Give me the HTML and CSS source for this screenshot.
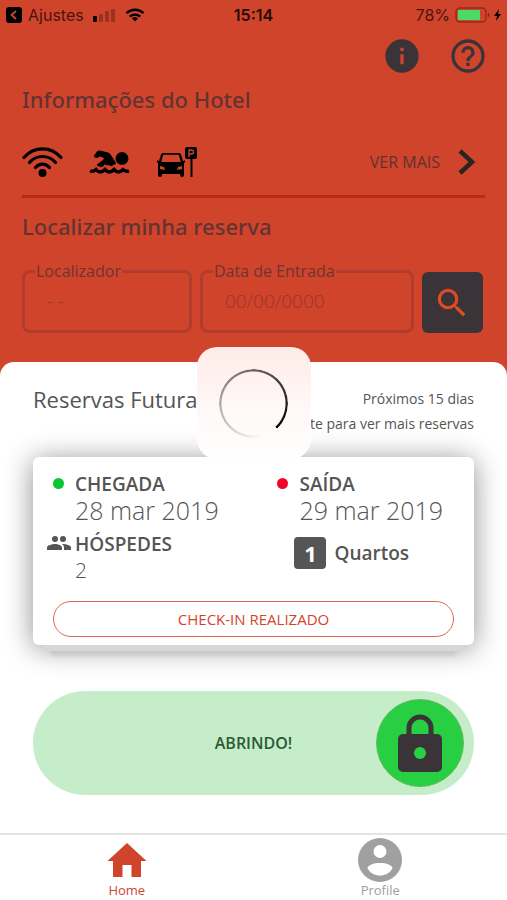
FILE: index.html
```html
<!DOCTYPE html>
<html lang="pt">
<head>
<meta charset="utf-8">
<meta name="viewport" content="width=device-width, initial-scale=1">
<title>Reservas</title>
<link rel="stylesheet" href="styles.css">
</head>
<body>
<header class="hero">
  <div class="status">
    <div class="status-left">
      <svg width="16" height="16" viewBox="0 0 16 16"><rect width="16" height="16" rx="3"/><path d="M10 4 5.500 8l4.500 4" fill="none" stroke="#d0442c" stroke-width="1.800"/></svg>
      <span class="carrier">Ajustes</span>
      <svg class="signal" width="23" height="14" viewBox="0 0 23 14"><rect x="0" y="8" width="4" height="6" rx="1"/><g opacity=".25"><rect x="6" y="6" width="4" height="8" rx="1"/><rect x="12" y="3" width="4" height="11" rx="1"/><rect x="18" y="1" width="4" height="13" rx="1"/></g></svg>
      <svg width="20" height="14" viewBox="0 0 20 14"><g fill="none" stroke="#000" stroke-width="2.400"><path d="M1.500 5.200a12.200 12.200 0 0 1 17 0M4.800 8.700a7.500 7.500 0 0 1 10.400 0"/></g><path d="m10 13.500-3-3a4.300 4.300 0 0 1 6 0z"/></svg>
    </div>
    <strong class="clock">15:14</strong>
    <div class="status-right">
      <span>78%</span>
      <svg width="48" height="16" viewBox="0 0 48 16"><rect x="1" y="1" width="30" height="14" rx="4" fill="none" stroke="#8c2b1b" stroke-width="1.400"/><rect x="3" y="3" width="22" height="10" rx="1" fill="#4cd964"/><path d="M33 5.500q3 2.500 0 5z" fill="#8c2b1b"/><path d="m44 2-5 7h3l-1 5 5-7h-3z"/></svg>
    </div>
  </div>
  <div class="tools">
    <button class="plain" aria-label="Informações"><svg width="40" height="40" viewBox="0 0 24 24"><path fill="#3a3338" d="M12 2a10 10 0 1 0 0 20 10 10 0 0 0 0-20zm1 15h-2v-6h2v6zm0-8h-2V7h2v2z"/></svg></button>
    <button class="plain" aria-label="Ajuda"><svg width="40" height="40" viewBox="0 0 24 24"><path fill="#3a3338" d="M11 18h2v-2h-2v2zm1-16a10 10 0 1 0 0 20 10 10 0 0 0 0-20zm0 18a8 8 0 1 1 0-16 8 8 0 0 1 0 16zm0-14a4 4 0 0 0-4 4h2a2 2 0 1 1 4 0c0 2-3 1.750-3 5h2c0-2.250 3-2.500 3-5a4 4 0 0 0-4-4z"/></svg></button>
  </div>
  <h1 class="title">Informações do Hotel</h1>
  <div class="amenities">
    <svg width="41" height="32" viewBox="0 0 41 32"><g fill="none" stroke="#000" stroke-width="3.200" stroke-linecap="round"><path d="M2 11.500C12 0 29 0 39 11.500M7.500 16.500c7-8 19-8 26 0M13.500 21.500c4-4.500 10-4.500 14 0"/></g><circle cx="20.500" cy="27" r="4"/></svg>
    <svg width="41" height="32" viewBox="0 0 41 32"><circle cx="33" cy="12.500" r="6.500"/><path d="M5 9.500 8 5.500Q9 4.300 11 4.500l8 2Q21 7 22 9l5 8-2 4-6-2-6 2-6-1-1 0 8-6 1-2-4-1.500-3 1.500q-3 0-3-2.500z"/><path d="M1 24q3 1 6-1.500 4 5 9 0 4.500 5 9 0 4.500 5 9 0 3 2.500 6 1.500" fill="none" stroke="#d0442c" stroke-width="6"/><path d="M1 25q3 1 6-1.500 4 5 9 0 4.500 5 9 0 4.500 5 9 0 3 2.500 6 1.500" fill="none" stroke="#000" stroke-width="3.400"/></svg>
    <svg width="41" height="32" viewBox="0 0 41 32"><rect x="29" y="1" width="12" height="12" rx="2"/><path d="M33 11V4h2.500a2 2 0 0 1 0 4H33" fill="none" stroke="#d0442c" stroke-width="1.300"/><path d="M34.500 12h2v19h-2z"/><path fill-rule="evenodd" d="M7 7h16q1.500 0 2 1.500L27 15l2-.700v2l-1 .700v12q0 2-2 2t-2-2v-1H6v1q0 2-2 2t-2-2V17l-1-.700v-2l2 .700L5 8.500Q5.500 7 7 7zm.200 1.800L5.200 16h19.600l-2-7.200zM4 20v3l5 1-1-3zm22 0-4 1-1 3 5-1z"/></svg>
    <a class="more" href="#hotel">VER MAIS <svg width="20" height="28" viewBox="0 0 20 28"><path d="m3 3 12 11L3 25" fill="none" stroke="#292522" stroke-width="4.500"/></svg></a>
  </div>
  <h2 class="title find">Localizar minha reserva</h2>
  <form class="search">
    <fieldset><legend><label for="loc">Localizador</label></legend><input id="loc" placeholder="- -"></fieldset>
    <fieldset><legend><label for="date">Data de Entrada</label></legend><input id="date" placeholder="00/00/0000"></fieldset>
    <button class="go" type="button" aria-label="Buscar"><svg width="38" height="38" viewBox="0 0 24 24"><path fill="#df4b22" d="M15.500 14h-.790l-.280-.270A6.470 6.470 0 0 0 16 9.500 6.500 6.500 0 1 0 9.500 16c1.610 0 3.090-.590 4.230-1.570l.270.280v.790l5 4.990L20.490 19l-4.990-5zm-6 0a4.500 4.500 0 1 1 0-9 4.500 4.500 0 0 1 0 9z"/></svg></button>
  </form>
</header>
<main class="sheet">
  <div class="loading" role="status" aria-label="Carregando"><div class="ring"></div></div>
  <div class="heading">
    <h2>Reservas Futuras</h2>
    <p>Próximos 15 dias<br>Aperte para ver mais reservas</p>
  </div>
  <section class="card">
    <div class="details">
      <div class="item">
        <span class="dot green"></span>
        <div><h3>CHEGADA</h3><p class="date">28 mar 2019</p></div>
      </div>
      <div class="item">
        <span class="dot red"></span>
        <div><h3>SAÍDA</h3><p class="date">29 mar 2019</p></div>
      </div>
      <div class="item">
        <svg class="people" width="24" height="24" viewBox="0 0 24 24"><path fill="#555" d="M16 11a3 3 0 1 0 0-6 3 3 0 0 0 0 6zm-8 0a3 3 0 1 0 0-6 3 3 0 0 0 0 6zm0 2c-2.330 0-8 1.170-8 3.500V19h15v-2.500C15 14.170 10.330 13 8 13zm8 0c-.290 0-.620.020-.970.050 1.160.840 1.970 1.970 1.970 3.450V19h7v-2.500c0-2.330-5.670-3.500-8-3.500z"/></svg>
        <div><h3>HÓSPEDES</h3><p class="count">2</p></div>
      </div>
      <div class="rooms"><strong>1</strong><h3>Quartos</h3></div>
    </div>
    <button class="checkin">CHECK-IN REALIZADO</button>
  </section>
  <button class="unlock">
    <span class="unlock-text">ABRINDO!</span>
    <span class="knob"><svg width="44" height="58" viewBox="0 0 44 58"><path d="M11 22V14a11 11 0 0 1 22 0v8" fill="none" stroke="#3a3338" stroke-width="5"/><rect y="20" width="44" height="38" rx="5" fill="#3a3338"/><circle cx="22" cy="39" r="6" fill="#28cf43"/></svg></span>
  </button>
</main>
<nav class="tabs">
  <a class="active" href="#home"><svg width="44" height="44" viewBox="0 0 44 44"><path fill="#d0442c" d="M22 5 2.500 23H8v16h9.500V27h9v12H36V23h5.500z"/></svg>Home</a>
  <a href="#profile"><svg width="44" height="44" viewBox="0 0 44 44"><path fill="#a0a0a0" fill-rule="evenodd" d="M22 0a22 22 0 1 1 0 44 22 22 0 0 1 0-44zm0 7a6.500 6.500 0 1 0 0 13 6.500 6.500 0 0 0 0-13zm0 18c-6 0-12.500 2-12.500 5.500C12 35 17 37.500 22 37.500S32 35 34.500 30.500C34.500 27 28 25 22 25z"/></svg>Profile</a>
</nav>
</body>
</html>
```

FILE: styles.css
```css
* {
  box-sizing: border-box;
}

body {
  margin: 0;
  min-height: 100vh;
  display: flex;
  flex-direction: column;
  background: #d0442c;
  color: #555;
  font-family: "Open Sans", "Noto Sans", sans-serif;
}

h1, h2, h3, p {
  margin: 0;
}

svg {
  display: block;
  flex: none;
}

a {
  color: inherit;
  text-decoration: none;
}

button {
  border: 0;
  padding: 0;
  font: inherit;
  cursor: pointer;
}

/* Header */
.hero {
  padding: 0 22px 29px;
}

.status {
  display: grid;
  grid-template-columns: 1fr auto 1fr;
  align-items: center;
  height: 30px;
  margin: 0 -16px;
  font-family: Inter, sans-serif;
  font-size: 16px;
  color: #4a150d;
}

.status-left,
.status-right {
  display: flex;
  align-items: center;
  gap: 6px;
}

.signal {
  margin: 0 3px;
}

.status-right {
  justify-content: flex-end;
  gap: 5px;
  margin-right: -2px;
}

.clock {
  color: #260b06;
  font-weight: 600;
}

.tools {
  display: flex;
  justify-content: flex-end;
  gap: 26px;
  height: 49px;
  margin-right: -3px;
  padding-top: 6px;
}

.plain {
  background: none;
  height: 40px;
}

.title {
  font-family: "Noto Sans", sans-serif;
  font-size: 22px;
  line-height: 40px;
  font-weight: 500;
  color: #633331;
}

.amenities {
  display: flex;
  align-items: center;
  gap: 26px;
  height: 79px;
  padding-top: 10px;
  border-bottom: 3px solid #b92818;
}

.more {
  display: flex;
  align-items: center;
  gap: 17px;
  margin-left: auto;
  padding-right: 8px;
  font-size: 16px;
  color: #5c3230;
}

.find {
  padding-top: 8px;
}

.search {
  display: grid;
  grid-template-columns: 169fr 213fr 61px;
  gap: 8px;
  align-items: end;
  margin: 16px 2px 0 0;
}

fieldset {
  min-width: 0;
  height: 71px;
  margin: 0;
  padding: 0 10px;
  border: 3px solid #b03c2d;
  border-radius: 8px;
}

legend {
  padding: 0 1px;
  font-size: 16px;
  line-height: 18px;
  color: #6c3531;
}

fieldset input {
  width: 100%;
  height: 42px;
  padding: 0 12px;
  border: 0;
  outline: 0;
  background: none;
  font: 300 19px "Open Sans", sans-serif;
}

fieldset input::placeholder {
  color: #983629;
  opacity: 1;
}

.go {
  display: grid;
  place-items: center;
  height: 61px;
  border-radius: 6px;
  background: #3a3338;
}

/* Reservations */
.sheet {
  position: relative;
  flex: 1;
  padding: 24px 33px 36px;
  border-radius: 14px 14px 0 0;
  background: #fff;
}

.loading {
  position: absolute;
  z-index: 1;
  top: -15px;
  left: 50%;
  display: grid;
  place-items: center;
  width: 114px;
  height: 112px;
  transform: translateX(-50%);
  border-radius: 20px;
  background: linear-gradient(#ffebe8, #fffafa 65%, #fffdfd);
}

.ring {
  width: 69px;
  height: 69px;
  border-radius: 50%;
  background: conic-gradient(from 165deg, #0000, #000 332deg, #0000 332deg);
  mask: radial-gradient(closest-side, #0000 calc(100% - 3px), #000 calc(100% - 2px));
}

.heading {
  display: flex;
  justify-content: space-between;
  height: 71px;
}

.heading h2 {
  font-size: 22px;
  line-height: 26px;
  font-weight: 400;
}

.heading p {
  font-size: 14px;
  line-height: 25px;
  text-align: right;
}

.card {
  padding: 14px 20px 8px;
  border-radius: 6px;
  background: #fff;
  box-shadow:
    0 16px 0 -10px #d8d7d6,
    0 28px 4px -18px #c9c8c7,
    0 3px 28px rgba(0, 0, 0, 0.45);
}

.details {
  display: grid;
  grid-template-columns: 225fr 177fr;
}

.item {
  display: flex;
  height: 60px;
}

.item > div {
  flex: none;
}

.dot {
  flex: none;
  width: 11px;
  height: 11px;
  margin: 7px 11px 0 0;
  border-radius: 50%;
}

.green {
  background: #08c630;
}

.red {
  background: #f30328;
}

.people {
  margin: 0 4px 0 -6px;
}

h3 {
  font-size: 19px;
  line-height: 26px;
  font-weight: 600;
}

.date {
  font-size: 25px;
  line-height: 26px;
  font-weight: 300;
}

.count {
  font-size: 21px;
  line-height: 26px;
  font-weight: 300;
}

.rooms {
  display: flex;
  align-items: center;
  gap: 8px;
  height: 44px;
  padding-left: 17px;
}

.rooms strong {
  width: 32px;
  border-radius: 4px;
  background: #555;
  color: #fff;
  font-size: 22px;
  line-height: 32px;
  text-align: center;
}

.checkin {
  width: 100%;
  height: 36px;
  margin-top: 10px;
  border: 1px solid #e0664c;
  border-radius: 18px;
  background: #fff;
  color: #d0442c;
  font-size: 15px;
}

.unlock {
  display: flex;
  align-items: center;
  width: 100%;
  height: 104px;
  margin-top: 46px;
  padding: 0 10px 0 98px;
  border-radius: 52px;
  background: #c5edca;
  color: #2c5935;
}

.unlock-text {
  flex: 1;
  font-size: 16px;
  font-weight: 600;
}

.knob {
  display: grid;
  place-items: center;
  width: 88px;
  height: 88px;
  border: 1px solid #66b860;
  border-radius: 50%;
  background: #28cf43;
}

/* Bottom navigation */
.tabs {
  display: flex;
  height: 67px;
  border-top: 2px solid #e4e4e4;
  background: #fff;
}

.tabs a {
  flex: 1;
  display: flex;
  flex-direction: column;
  align-items: center;
  padding-top: 3px;
  color: #a0a0a0;
  font-size: 13px;
  line-height: 16px;
}

.tabs .active {
  color: #d0442c;
}
```
